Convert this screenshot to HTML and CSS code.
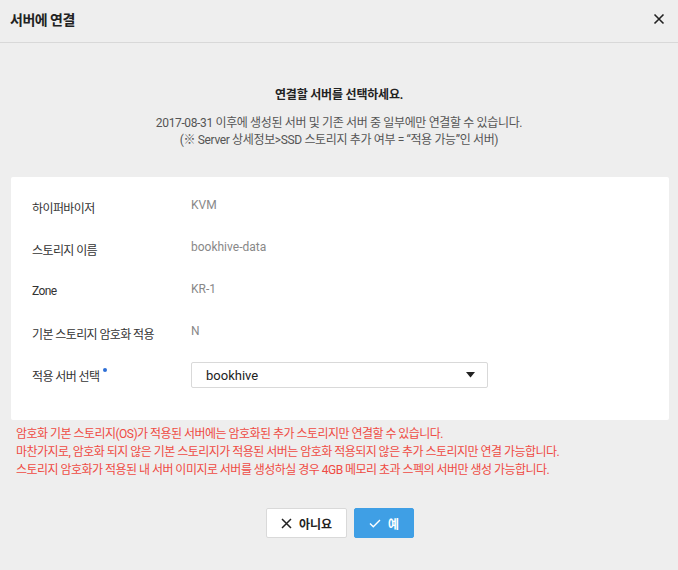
FILE: index.html
```html
<!DOCTYPE html>
<html lang="ko">
<head>
<meta charset="utf-8">
<link rel="stylesheet" href="styles.css">
</head>
<body>
<div class="dialog">
  <div class="header">
    <div class="title">서버에 연결</div>
    <svg class="close" width="12" height="12" viewBox="0 0 12 12"><path d="M1.5 1.5 L10.5 10.5 M10.5 1.5 L1.5 10.5" stroke="#222" stroke-width="1.6" fill="none"/></svg>
  </div>
  <div class="intro">
    <div class="lead">연결할 서버를 선택하세요.</div>
    <div class="sub">2017-08-31 이후에 생성된 서버 및 기존 서버 중 일부에만 연결할 수 있습니다.<br>(※ Server 상세정보&gt;SSD 스토리지 추가 여부 = “적용 가능”인 서버)</div>
  </div>
  <div class="card">
    <div class="row"><div class="label">하이퍼바이저</div><div class="value">KVM</div></div>
    <div class="row"><div class="label">스토리지 이름</div><div class="value">bookhive-data</div></div>
    <div class="row"><div class="label">Zone</div><div class="value">KR-1</div></div>
    <div class="row"><div class="label">기본 스토리지 암호화 적용</div><div class="value">N</div></div>
    <div class="row sel-row"><div class="label">적용 서버 선택<span class="req"></span></div>
      <div class="select"><span>bookhive</span><svg width="9" height="6" viewBox="0 0 9 6"><path d="M0 0 H9 L4.5 5.5 Z" fill="#222"/></svg></div>
    </div>
  </div>
  <div class="notes">
    <p>암호화 기본 스토리지(OS)가 적용된 서버에는 암호화된 추가 스토리지만 연결할 수 있습니다.</p>
    <p>마찬가지로, 암호화 되지 않은 기본 스토리지가 적용된 서버는 암호화 적용되지 않은 추가 스토리지만 연결 가능합니다.</p>
    <p>스토리지 암호화가 적용된 내 서버 이미지로 서버를 생성하실 경우 4GB 메모리 초과 스펙의 서버만 생성 가능합니다.</p>
  </div>
  <div class="actions">
    <button class="btn no"><svg width="11" height="11" viewBox="0 0 11 11"><path d="M1 1 L10 10 M10 1 L1 10" stroke="#222" stroke-width="1.5" fill="none"/></svg>아니요</button>
    <button class="btn yes"><svg width="12" height="9" viewBox="0 0 12 9"><path d="M1 4.5 L4.3 7.8 L11 1" stroke="#fff" stroke-width="1.4" fill="none"/></svg>예</button>
  </div>
</div>
</body>
</html>
```

FILE: styles.css
```css
html, body {
  margin: 0;
  padding: 0;
  background: #eeeeee;
}
body {
  font-family: Roboto, "Noto Sans CJK KR", sans-serif;
  color: #333;
  width: 678px;
  height: 570px;
  overflow: hidden;
}
.header {
  display: flex;
  justify-content: space-between;
  align-items: center;
  height: 43px;
  box-sizing: border-box;
  padding: 0 13px 5px 10px;
  border-bottom: 1px solid #d8d8d8;
}
.title {
  font-size: 14px;
  font-weight: bold;
  color: #222;
  letter-spacing: -0.5px;
}
.close { display: block; }
.intro {
  text-align: center;
  padding-top: 43px;
}
.lead {
  font-size: 12px;
  font-weight: bold;
  color: #222;
  line-height: 18px;
  letter-spacing: -0.2px;
}
.sub {
  margin-top: 11px;
  font-size: 12px;
  line-height: 17px;
  color: #555;
  letter-spacing: -0.36px;
}
.card {
  margin: 28px 9px 0 11px;
  background: #fff;
  border-radius: 2px;
  padding: 9px 21px 24px;
}
.row {
  display: flex;
  height: 42px;
  align-items: center;
  font-size: 12px;
}
.label {
  width: 159px;
  color: #333;
  letter-spacing: -0.6px;
}
.value {
  color: #888;
  margin-top: -5px;
}
.req {
  display: inline-block;
  width: 4px;
  height: 4px;
  border-radius: 50%;
  background: #2f6fd6;
  vertical-align: top;
  margin-left: 4px;
  margin-top: 1px;
}
.select {
  width: 297px;
  height: 26px;
  box-sizing: border-box;
  border: 1px solid #d9d9d9;
  border-radius: 2px;
  display: flex;
  align-items: center;
  justify-content: space-between;
  padding: 0 12px 0 14px;
  font-size: 13px;
  color: #222;
}
.notes {
  padding: 5px 16px 0;
}
.notes p {
  margin: 0;
  font-size: 12px;
  line-height: 18px;
  color: #ee4b43;
  letter-spacing: -0.53px;
}
.actions {
  display: flex;
  justify-content: center;
  gap: 7px;
  margin-top: 29px;
  padding-left: 2px;
}
.btn {
  height: 30px;
  border-radius: 2px;
  font-family: Roboto, "Noto Sans CJK KR", sans-serif;
  font-size: 12px;
  font-weight: bold;
  display: flex;
  align-items: center;
  justify-content: center;
  gap: 7px;
  cursor: pointer;
}
.no {
  width: 81px;
  background: #fff;
  border: 1px solid #d9d9d9;
  color: #222;
}
.yes {
  width: 60px;
  background: #3f9fe5;
  border: 1px solid #3f9fe5;
  color: #fff;
}
```
